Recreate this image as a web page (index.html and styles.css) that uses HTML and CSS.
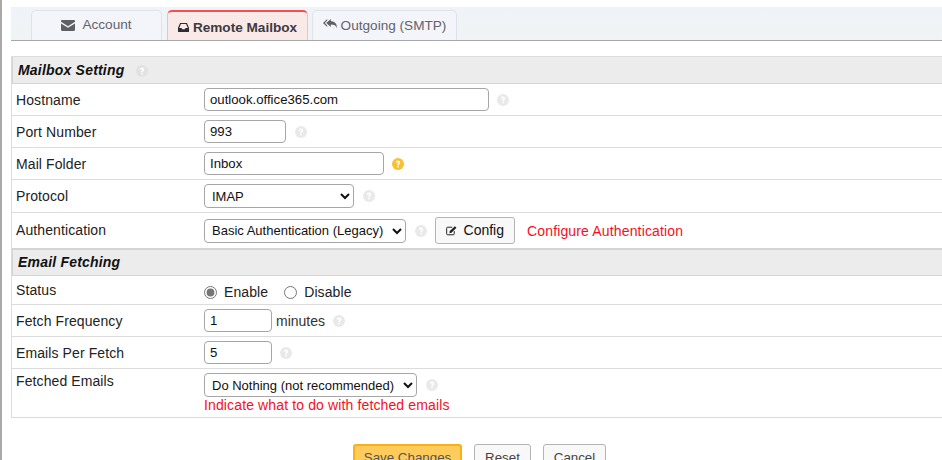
FILE: index.html
```html
<!DOCTYPE html>
<html lang="en">
<head>
<meta charset="utf-8">
<title>Remote Mailbox</title>
<link rel="stylesheet" href="styles.css">
</head>
<body>
<svg class="defs" width="0" height="0" aria-hidden="true">
  <symbol id="help" viewBox="0 0 12 12">
    <circle cx="6" cy="6" r="6" fill="currentColor"/>
    <path d="M3.800 4.600C3.800 3.300 4.800 2.600 6 2.600s2.200.8 2.200 1.900c0 1.600-1.500 1.500-1.500 2.700H5.200c0-1.900 1.400-1.800 1.400-2.700 0-.4-.3-.6-.6-.6-.5 0-.7.3-.8.8z" fill="#fff"/>
    <rect x="5.200" y="7.900" width="1.500" height="1.500" fill="#fff"/>
  </symbol>
</svg>
<main class="page">
  <nav class="tabs">
    <a class="tab tab-account">
      <svg class="tab-icon" width="14" height="11" viewBox="0 0 14 11"><path d="M0 1.200C0 .5.5 0 1.200 0h11.600c.7 0 1.200.5 1.200 1.200v.6L7 6.200 0 1.800z" fill="#5f5f66"/><path d="M0 3.400 7 7.800l7-4.400v6.400c0 .7-.5 1.200-1.200 1.200H1.200C.5 11 0 10.500 0 9.800z" fill="#5f5f66"/></svg>
      <span>Account</span>
    </a>
    <a class="tab tab-active">
      <svg width="11" height="9" viewBox="0 0 11 9"><path d="M2.500.5h6L10.500 5v3a.7.7 0 0 1-.7.7H1.200A.7.7 0 0 1 .5 8V5z" fill="none" stroke="#2c2c33" stroke-width="1.200"/><path d="M.8 5h2.700l.7 1.300h2.600L7.500 5h2.700v3.400H.8z" fill="#2c2c33"/></svg>
      <span>Remote Mailbox</span>
    </a>
    <a class="tab tab-outgoing">
      <svg width="14" height="11" viewBox="0 0 14 11"><path d="M4.200 0v1.500L1.900 4l2.300 2.500V8L0 4z" fill="#5f5f66"/><path d="M7.800 0v2.300c3.800 0 6.200 2.300 6.200 6.700-1-2.300-3-3.400-6.200-3.400V8L3.300 4z" fill="#5f5f66"/></svg>
      <span>Outgoing (SMTP)</span>
    </a>
  </nav>

  <section class="panel">
    <h2 class="section-head section-first">Mailbox Setting <svg class="help help-head"><use href="#help"/></svg></h2>

    <div class="row row-host">
      <label class="label">Hostname</label>
      <div class="control"><input class="input w-host" value="outlook.office365.com"><svg class="help"><use href="#help"/></svg></div>
    </div>
    <div class="row">
      <label class="label">Port Number</label>
      <div class="control"><input class="input w-port" value="993"><svg class="help help-sel"><use href="#help"/></svg></div>
    </div>
    <div class="row">
      <label class="label">Mail Folder</label>
      <div class="control"><input class="input w-folder" value="Inbox"><svg class="help help-warn"><use href="#help"/></svg></div>
    </div>
    <div class="row row-protocol">
      <label class="label">Protocol</label>
      <div class="control"><select class="select w-protocol"><option>IMAP</option></select><svg class="help help-sel"><use href="#help"/></svg></div>
    </div>
    <div class="row row-auth">
      <label class="label">Authentication</label>
      <div class="control">
        <select class="select w-auth"><option>Basic Authentication (Legacy)</option></select>
        <svg class="help help-sel"><use href="#help"/></svg>
        <button class="btn btn-config" type="button">
          <svg width="15" height="13" viewBox="0 0 14 12"><path d="M10 6.800V10a1.200 1.200 0 0 1-1.200 1.200H2A1.200 1.200 0 0 1 .8 10V3.200A1.200 1.200 0 0 1 2 2h5.500" fill="none" stroke="#222" stroke-width="1.200"/><path d="M4.500 6.500 10.800.8l1.900 1.900-6 6-2.500.5z" fill="#222"/></svg>
          Config
        </button>
        <span class="note note-auth">Configure Authentication</span>
      </div>
    </div>

    <h2 class="section-head section-fetch">Email Fetching</h2>

    <div class="row row-status">
      <label class="label">Status</label>
      <div class="control radios">
        <label class="radio"><input type="radio" name="status" checked>Enable</label>
        <label class="radio"><input type="radio" name="status">Disable</label>
      </div>
    </div>
    <div class="row">
      <label class="label">Fetch Frequency</label>
      <div class="control"><input class="input w-num" value="1"><span class="unit">minutes</span><svg class="help"><use href="#help"/></svg></div>
    </div>
    <div class="row">
      <label class="label">Emails Per Fetch</label>
      <div class="control"><input class="input w-num" value="5"><svg class="help"><use href="#help"/></svg></div>
    </div>
    <div class="row row-fetched">
      <label class="label">Fetched Emails</label>
      <div class="stack">
        <div class="control"><select class="select w-fetched"><option>Do Nothing (not recommended)</option></select><svg class="help help-sel"><use href="#help"/></svg></div>
        <span class="note">Indicate what to do with fetched emails</span>
      </div>
    </div>
  </section>

  <div class="actions">
    <button class="btn btn-primary" type="button">Save Changes</button>
    <button class="btn btn-reset" type="button">Reset</button>
    <button class="btn btn-cancel" type="button">Cancel</button>
  </div>
</main>
</body>
</html>
```
FILE: styles.css
```css
html, body {
  margin: 0;
  height: 460px;
  overflow: hidden;
  background: #fff;
}
body {
  font-family: "Liberation Sans", Arial, sans-serif;
  font-size: 14px;
  color: #222;
  border-left: 2px solid #a9a9a9;
  box-sizing: border-box;
}
.defs { display: block; height: 0; }
.page {
  width: 937px;
  margin-left: 9px;
  padding-top: 7px;
}
.tabs {
  display: flex;
  align-items: flex-end;
  gap: 4px;
  height: 33px;
  padding-left: 20px;
  background: linear-gradient(#eff3f8, #f1f3f5);
  border-bottom: 1px solid #a8a8a8;
  box-sizing: content-box;
}
.tab {
  display: flex;
  justify-content: center;
  gap: 7px;
  box-sizing: border-box;
  height: 30px;
  padding-top: 6px;
  background: #f3f5fa;
  border: 1px solid #dfe2e8;
  border-bottom: 0;
  border-radius: 5px 5px 0 0;
  color: #63636b;
  font-size: 13.600px;
  white-space: nowrap;
}
.tab-account { width: 131px; }
.tab-account svg { margin-top: 3px; }
.tab-active {
  width: 141px;
  margin-left: 1px;
  gap: 4px;
  padding-top: 8px;
  background: #f9e9e7;
  border: 1px solid #dcc9c7;
  border-top: 2px solid #f25050;
  border-bottom: 0;
  color: #3d3a42;
  font-weight: 700;
}
.tab-active svg { margin-top: 3px; }
.tab-outgoing { width: 145px; gap: 4px; padding-top: 7px; }
.tab-outgoing svg { margin-top: 1px; }

.panel {
  margin-top: 15px;
  border: 1px solid #dcdcdc;
  border-right: 0;
}
.section-head {
  display: flex;
  align-items: center;
  gap: 12px;
  box-sizing: border-box;
  height: 28px;
  margin: 0;
  padding-left: 5px;
  background: #ececec;
  border-top: 2px solid #d4d4d4;
  border-bottom: 1px solid #d4d4d4;
  border-left: 1px solid #d4d4d4;
  color: #111;
  font-size: 14px;
  font-style: italic;
  font-weight: 700;
  letter-spacing: .2px;
}
.section-first { height: 27px; border-top-width: 0; }
.section-fetch { padding-bottom: 2px; }
.row {
  display: flex;
  box-sizing: border-box;
  height: 32px;
  align-items: center;
  padding-left: 4px;
  border-bottom: 1px solid #dcdcdc;
}
.row-protocol { height: 33px; }
.row-auth { height: 35px; border-bottom: 0; }
.row-status { height: 29px; }
.row-fetched {
  height: 48px;
  align-items: flex-start;
  border-bottom: 0;
}
.label { width: 188px; flex: none; color: #222; letter-spacing: .1px; }
.row-protocol .label { margin-top: -1px; }
.row-auth .label { margin-top: -1px; }
.row-fetched .label { margin-top: 4px; }
.control {
  display: flex;
  align-items: center;
  white-space: nowrap;
}
.stack { display: flex; flex-direction: column; padding-top: 4px; }
.input {
  box-sizing: border-box;
  height: 23px;
  padding: 0 5px;
  border: 1px solid #a6a6a6;
  border-radius: 4px;
  background: #fff;
  color: #111;
  font: 13.200px "Liberation Sans", Arial, sans-serif;
}
.w-host { width: 285px; }
.w-port { width: 82px; }
.w-folder { width: 180px; }
.w-num { width: 68px; }
.select {
  box-sizing: border-box;
  height: 24px;
  padding: 0 0 0 3px;
  border: 1px solid #a6a6a6;
  border-radius: 4px;
  background: #fff;
  color: #111;
  font: 13px "Liberation Sans", Arial, sans-serif;
}
.w-protocol { width: 150px; }
.w-auth { width: 202px; }
.w-fetched { width: 213px; }
.help {
  width: 12px;
  height: 12px;
  margin-left: 8px;
  flex: none;
  color: #e9e9e9;
}
.help-sel { margin-left: 9px; }
.help-head { margin-left: 0; margin-top: 1px; color: #e2e2e2; }
.help-warn { color: #fbc02d; }
.unit { margin-left: 4px; color: #333; }
.btn {
  box-sizing: border-box;
  height: 27px;
  padding: 0 10px;
  background: #f8f8f8;
  border: 1px solid #b4b4b4;
  border-radius: 3px;
  color: #444;
  font: 14px "Liberation Sans", Arial, sans-serif;
  white-space: nowrap;
}
.btn-config {
  display: flex;
  align-items: center;
  gap: 6px;
  width: 80px;
  margin-left: 8px;
  margin-top: -1px;
  color: #111;
}
.note { color: #f70f24; line-height: 17px; letter-spacing: .13px; }
.note-auth { margin-left: 12px; margin-top: 2px; letter-spacing: .15px; }
.radios { margin-top: 4px; }
.radio {
  display: flex;
  align-items: center;
  color: #222;
  letter-spacing: .1px;
}
.radio input {
  width: 13px;
  height: 13px;
  margin: 0 7px 0 0;
  accent-color: #757575;
}
.radio + .radio { margin-left: 16px; }
.actions {
  display: flex;
  justify-content: center;
  gap: 12px;
  margin-top: 26px;
}
.actions .btn { height: 30px; padding: 0 0 4px; font-size: 13.333px; }
.actions .btn-primary {
  width: 109px;
  background: #ffcc5c;
  border: 2px solid #fbb016;
  color: #555;
}
.actions .btn-reset { width: 57px; }
.actions .btn-cancel { width: 63px; }
```
